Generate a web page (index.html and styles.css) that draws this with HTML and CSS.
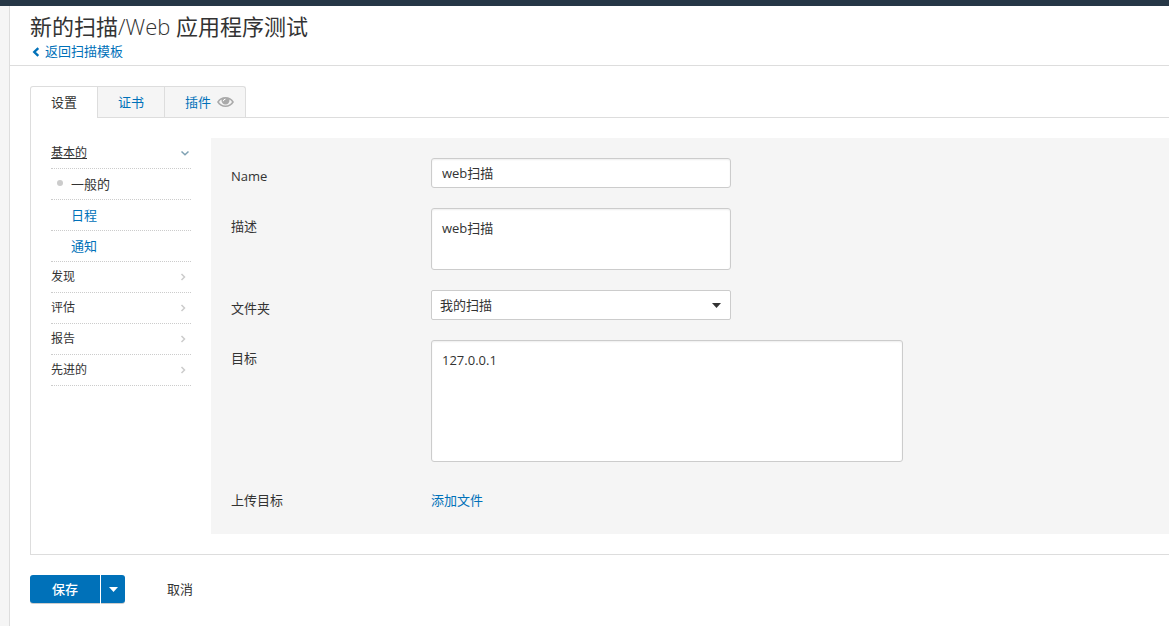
FILE: index.html
```html
<!DOCTYPE html>
<html lang="zh-CN">
<head>
<meta charset="utf-8">
<title>新的扫描</title>
<link rel="stylesheet" href="styles.css">
</head>
<body>
<div class="topbar"></div>
<div class="shell">
  <main class="main">
    <header class="header">
      <h1 class="title">新的扫描<span class="title-light">/Web</span> 应用程序测试</h1>
      <a class="back" href="#"><svg class="back-icon" viewBox="0 0 8 10"><path d="M6.300 1.200 L2.300 5 L6.300 8.800"/></svg>返回扫描模板</a>
    </header>
    <div class="content">
      <nav class="tabs">
        <a class="tab tab-active" href="#">设置</a>
        <a class="tab" href="#">证书</a>
        <a class="tab tab-eye" href="#">插件<svg class="eye" viewBox="0 0 17 12"><path fill="#aaa" fill-rule="evenodd" d="M0 6C2 2.700 5 1 8.500 1S15 2.700 17 6C15 9.300 12 11 8.500 11S2 9.300 0 6ZM2 6C3.500 8.300 5.500 9.400 8.500 9.400S13.500 8.300 15 6C14.300 4.900 13.500 4.100 12.400 3.500A4 4 0 1 1 4.600 3.500C3.500 4.100 2.700 4.900 2 6Z"/><path d="M6.300 5.200Q6.500 3.300 8.500 3.100" fill="none" stroke="#fff" stroke-width="1"/></svg></a>
      </nav>
      <section class="panel">
        <nav class="side">
          <a class="side-item side-open" href="#"><span class="underline">基本的</span><svg class="arrow" viewBox="0 0 10 10"><path d="M1.500 3.500 L5 6.700 L8.500 3.500"/></svg></a>
          <a class="side-item side-sub side-current" href="#">一般的</a>
          <a class="side-item side-sub" href="#">日程</a>
          <a class="side-item side-sub" href="#">通知</a>
          <a class="side-item" href="#">发现<svg class="arrow" viewBox="0 0 10 10"><path d="M3.500 2 L6.500 5 L3.500 8"/></svg></a>
          <a class="side-item" href="#">评估<svg class="arrow" viewBox="0 0 10 10"><path d="M3.500 2 L6.500 5 L3.500 8"/></svg></a>
          <a class="side-item" href="#">报告<svg class="arrow" viewBox="0 0 10 10"><path d="M3.500 2 L6.500 5 L3.500 8"/></svg></a>
          <a class="side-item" href="#">先进的<svg class="arrow" viewBox="0 0 10 10"><path d="M3.500 2 L6.500 5 L3.500 8"/></svg></a>
        </nav>
        <form class="form" id="scan-form">
          <div class="row">
            <label class="label" for="name">Name</label>
            <input class="field" id="name" type="text" value="web扫描">
          </div>
          <div class="row">
            <label class="label" for="desc">描述</label>
            <textarea class="field area" id="desc">web扫描</textarea>
          </div>
          <div class="row">
            <label class="label" for="folder">文件夹</label>
            <div class="select-wrap">
              <select class="field select" id="folder"><option>我的扫描</option></select>
              <svg class="caret select-caret" viewBox="0 0 9 5"><path d="M0 0H9L4.500 5Z"/></svg>
            </div>
          </div>
          <div class="row">
            <label class="label" for="targets">目标</label>
            <textarea class="field area area-large" id="targets">127.0.0.1</textarea>
          </div>
          <div class="row">
            <span class="label">上传目标</span>
            <a class="upload" href="#">添加文件</a>
          </div>
        </form>
      </section>
      <footer class="actions">
        <button class="save" type="submit" form="scan-form">保存</button>
        <button class="save-more" type="button" aria-label="更多"><svg class="caret" viewBox="0 0 9 5"><path d="M0 0H9L4.500 5Z"/></svg></button>
        <button class="cancel" type="button">取消</button>
      </footer>
    </div>
  </main>
</div>
</body>
</html>
```

FILE: styles.css
```css
* {
  box-sizing: border-box;
}

body {
  margin: 0;
  min-height: 100vh;
  display: flex;
  flex-direction: column;
  background: #f5f5f5;
  color: #333;
  font: 13px/20px "Open Sans", "Noto Sans CJK SC", sans-serif;
}

a {
  color: #0071b9;
  text-decoration: none;
}

input,
textarea,
select,
button {
  font: inherit;
  color: inherit;
  margin: 0;
}

.topbar {
  height: 6px;
  background: #263746;
}

.shell {
  flex: 1;
  display: flex;
  padding-left: 9px;
}

.main {
  flex: 1;
  border-left: 1px solid #ddd;
  background: #fff;
}

.header {
  padding: 5px 20px 4px;
  border-bottom: 1px solid #ddd;
}

.title {
  margin: 0;
  font-size: 22px;
  line-height: 30px;
  font-weight: 400;
}

.title-light {
  font-weight: 300;
}

.back {
  display: flex;
  align-items: center;
}

.back-icon {
  width: 8px;
  height: 10px;
  margin: 2px 5px 0 2px;
  fill: none;
  stroke: #0071b9;
  stroke-width: 2.4;
}

.content {
  padding: 20px 0 20px 20px;
}

.tabs {
  display: flex;
  border-bottom: 1px solid #ddd;
}

.tab {
  display: flex;
  align-items: center;
  height: 31px;
  padding: 0 20px;
  border-top: 1px solid #ddd;
  border-right: 1px solid #ddd;
  background: #f5f5f5;
}

.tab-active {
  height: 32px;
  margin-bottom: -1px;
  padding-bottom: 2px;
  border-left: 1px solid #ddd;
  border-top-left-radius: 3px;
  background: #fff;
  color: #333;
}

.tab-eye {
  padding-right: 11px;
  border-top-right-radius: 3px;
}

.eye {
  width: 17px;
  height: 12px;
  margin-left: 6px;
}

.panel {
  display: flex;
  gap: 20px;
  padding: 20px 0 20px 20px;
  border-left: 1px solid #ddd;
  border-bottom: 1px solid #ddd;
}

.side {
  flex: 0 0 140px;
}

.side-item {
  position: relative;
  display: flex;
  align-items: center;
  justify-content: space-between;
  height: 31px;
  border-bottom: 1px dotted #ccc;
  color: #333;
  font-size: 12px;
}

.side-sub {
  padding-left: 20px;
  color: #0071b9;
  font-size: 13px;
}

.side-current {
  color: #333;
}

.side-current::before {
  content: "";
  position: absolute;
  left: 6px;
  top: 11px;
  width: 6px;
  height: 6px;
  border-radius: 50%;
  background: #ccc;
}

.underline {
  text-decoration: underline;
}

.arrow {
  width: 10px;
  height: 10px;
  margin-right: 3px;
  fill: none;
  stroke: #ccc;
  stroke-width: 1.5;
}

.side-open .arrow {
  margin-right: 1px;
  stroke: #7fa1b3;
}

.form {
  flex: 1;
  display: flex;
  flex-direction: column;
  gap: 20px;
  padding: 20px;
  background: #f5f5f5;
}

.row {
  display: flex;
  align-items: flex-start;
}

.label {
  flex: 0 0 200px;
  padding-top: 8px;
}

.field {
  display: block;
  width: 300px;
  height: 30px;
  padding: 0 10px 2px;
  border: 1px solid #ccc;
  border-radius: 3px;
  background: #fff;
  box-shadow: inset 0 1px 2px #eee;
  outline: 0;
}

.area {
  height: 62px;
  padding: 9px 10px;
  resize: none;
}

.area-large {
  width: 472px;
  height: 122px;
}

.select-wrap {
  position: relative;
}

.select {
  appearance: none;
  padding: 0 8px;
  border-radius: 2px;
  box-shadow: none;
}

.caret {
  display: block;
  width: 9px;
  height: 5px;
  fill: currentColor;
}

.select-caret {
  position: absolute;
  right: 10px;
  top: 13px;
  pointer-events: none;
}

.upload {
  padding: 8px 0 4px;
}

.actions {
  display: flex;
  padding-top: 20px;
}

.save,
.save-more,
.cancel {
  height: 28px;
  padding: 0;
  border: 0;
}

.save,
.save-more {
  background: #0071b9;
  color: #fff;
  box-shadow: 0 1px 0 #ccc;
}

.save {
  width: 70px;
  border-radius: 3px 0 0 3px;
  font-weight: 500;
}

.save-more {
  display: flex;
  align-items: center;
  justify-content: center;
  width: 24px;
  margin-left: 1px;
  border-radius: 0 3px 3px 0;
}

.cancel {
  margin-left: 42px;
  background: none;
}
```
